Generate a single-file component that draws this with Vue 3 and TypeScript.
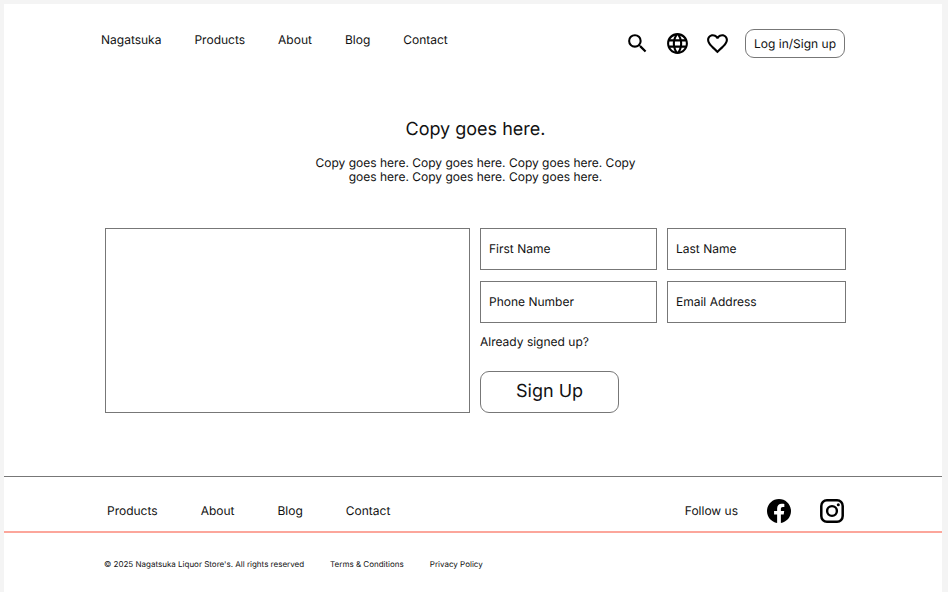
<script setup lang="ts">
interface LinkItem {
  label: string
  href: string
}

interface Field {
  id: string
  label: string
  type: string
}

const mainLinks: LinkItem[] = [
  { label: 'Nagatsuka', href: '#home' },
  { label: 'Products', href: '#products' },
  { label: 'About', href: '#about' },
  { label: 'Blog', href: '#blog' },
  { label: 'Contact', href: '#contact' },
]

const footerLinks: LinkItem[] = mainLinks.slice(1)

const legalLinks: LinkItem[] = [
  { label: 'Terms & Conditions', href: '#terms' },
  { label: 'Privacy Policy', href: '#privacy' },
]

const fields: Field[] = [
  { id: 'first-name', label: 'First Name', type: 'text' },
  { id: 'last-name', label: 'Last Name', type: 'text' },
  { id: 'phone', label: 'Phone Number', type: 'tel' },
  { id: 'email', label: 'Email Address', type: 'email' },
]
</script>

<template>
  <div class="page">
    <header class="header">
      <nav class="main-nav" aria-label="Main">
        <a v-for="link in mainLinks" :key="link.label" :href="link.href">{{ link.label }}</a>
      </nav>
      <div class="tools">
        <button class="icon-button" type="button" aria-label="Search">
          <svg viewBox="0 0 24 24"><path d="M15.5 14h-.79l-.28-.27A6.471 6.471 0 0 0 16 9.5 6.5 6.5 0 1 0 9.5 16c1.61 0 3.09-.59 4.23-1.57l.27.28v.79l5 4.99L20.49 19l-4.99-5zm-6 0C7.01 14 5 11.99 5 9.5S7.01 5 9.5 5 14 7.01 14 9.5 11.99 14 9.5 14z" /></svg>
        </button>
        <button class="icon-button" type="button" aria-label="Language">
          <svg viewBox="0 0 24 24"><path d="M11.99 2C6.47 2 2 6.48 2 12s4.47 10 9.99 10C17.52 22 22 17.52 22 12S17.52 2 11.99 2zm6.93 6h-2.95a15.65 15.65 0 0 0-1.38-3.56A8.03 8.03 0 0 1 18.92 8zM12 4.04c.83 1.2 1.48 2.53 1.91 3.96h-3.82c.43-1.43 1.08-2.76 1.91-3.96zM4.26 14C4.1 13.36 4 12.69 4 12s.1-1.36.26-2h3.38c-.08.66-.14 1.32-.14 2s.06 1.34.14 2H4.26zm.82 2h2.95c.32 1.25.78 2.45 1.38 3.56A7.987 7.987 0 0 1 5.08 16zm2.95-8H5.08a7.987 7.987 0 0 1 4.33-3.56A15.65 15.65 0 0 0 8.03 8zM12 19.96c-.83-1.2-1.48-2.53-1.91-3.96h3.82c-.43 1.43-1.08 2.76-1.91 3.96zM14.34 14H9.66c-.09-.66-.16-1.32-.16-2s.07-1.35.16-2h4.68c.09.65.16 1.32.16 2s-.07 1.34-.16 2zm.25 5.56c.6-1.11 1.06-2.31 1.38-3.56h2.95a8.03 8.03 0 0 1-4.33 3.56zM16.36 14c.08-.66.14-1.32.14-2s-.06-1.34-.14-2h3.38c.16.64.26 1.31.26 2s-.1 1.36-.26 2h-3.38z" /></svg>
        </button>
        <button class="icon-button" type="button" aria-label="Favourites">
          <svg viewBox="0 0 24 24"><path d="M16.5 3c-1.74 0-3.41.81-4.5 2.09C10.91 3.81 9.24 3 7.5 3 4.42 3 2 5.42 2 8.5c0 3.78 3.4 6.86 8.55 11.54L12 21.35l1.45-1.32C18.6 15.36 22 12.28 22 8.5 22 5.42 19.58 3 16.5 3zm-4.4 15.55-.1.1-.1-.1C7.14 14.24 4 11.39 4 8.5 4 6.5 5.5 5 7.5 5c1.54 0 3.04.99 3.57 2.36h1.87C13.46 5.99 14.96 5 16.5 5c2 0 3.5 1.5 3.5 3.5 0 2.89-3.14 5.74-7.9 10.05z" /></svg>
        </button>
        <button class="login" type="button">Log in/Sign up</button>
      </div>
    </header>

    <main class="content">
      <section class="intro">
        <h1>Copy goes here.</h1>
        <p>Copy goes here. Copy goes here. Copy goes here. Copy goes here. Copy goes here. Copy goes here.</p>
      </section>

      <section class="signup">
        <div class="picture"></div>
        <form class="form" @submit.prevent>
          <div class="fields">
            <div v-for="field in fields" :key="field.id" class="field">
              <label class="field-label" :for="field.id">{{ field.label }}</label>
              <input :id="field.id" :type="field.type" placeholder=" " />
            </div>
          </div>
          <a class="already" href="#login">Already signed up?</a>
          <button class="submit" type="submit">Sign Up</button>
        </form>
      </section>
    </main>

    <footer class="footer">
      <div class="footer-main">
        <nav class="footer-nav" aria-label="Footer">
          <a v-for="link in footerLinks" :key="link.label" :href="link.href">{{ link.label }}</a>
        </nav>
        <div class="social">
          <span>Follow us</span>
          <a href="#facebook" aria-label="Facebook">
            <svg viewBox="0 0 24 24"><path d="M24 12.07C24 5.41 18.63 0 12 0S0 5.41 0 12.07c0 6.03 4.39 11.02 10.13 11.93v-8.44H7.08v-3.49h3.05V9.41c0-3.02 1.79-4.69 4.53-4.69 1.31 0 2.68.24 2.68.24v2.97h-1.51c-1.49 0-1.95.93-1.95 1.89v2.25h3.32l-.53 3.49h-2.79V24C19.61 23.09 24 18.1 24 12.07z" /></svg>
          </a>
          <a href="#instagram" aria-label="Instagram">
            <svg viewBox="0 0 24 24">
              <rect x="1.3" y="1.3" width="21.4" height="21.4" rx="5.6" fill="none" stroke="currentColor" stroke-width="2.5" />
              <circle cx="12" cy="12" r="4.9" fill="none" stroke="currentColor" stroke-width="2.4" />
              <circle cx="18.3" cy="5.7" r="1.5" />
            </svg>
          </a>
        </div>
      </div>
      <div class="legal">
        <span>© 2025 Nagatsuka Liquor Store's. All rights reserved</span>
        <a v-for="link in legalLinks" :key="link.label" :href="link.href">{{ link.label }}</a>
      </div>
    </footer>
  </div>
</template>

<style>
body {
  background: #f4f4f4;
}
</style>

<style scoped>
.page {
  box-sizing: border-box;
  min-height: calc(100vh - 4px);
  margin: 4px 6px 0 4px;
  background: #fff;
  color: #111;
  font-family: Inter, "Liberation Sans", sans-serif;
  font-size: 12px;
  line-height: 14px;
  text-rendering: geometricPrecision;
}

a {
  color: inherit;
  text-decoration: none;
}

button {
  padding: 0;
  border: 0;
  background: none;
  color: inherit;
  font: inherit;
  text-rendering: inherit;
  cursor: pointer;
}

svg {
  display: block;
  width: 100%;
  height: 100%;
  color: #000;
  fill: currentColor;
}

.header {
  display: flex;
  justify-content: space-between;
  align-items: flex-start;
  padding: 25px 97px 0;
}

.main-nav {
  display: flex;
  gap: 33px;
  line-height: 22px;
}

.tools {
  display: flex;
  align-items: center;
  gap: 15px;
}

.icon-button {
  width: 25px;
  height: 25px;
}

.login {
  padding: 6px 8px;
  border: 1px solid #777;
  border-radius: 9px;
  line-height: 15px;
}

.content {
  padding: 61px 96px 0 101px;
}

.intro {
  display: flex;
  flex-direction: column;
  align-items: center;
  gap: 15px;
  text-align: center;
}

h1 {
  margin: 0;
  font-size: 18px;
  font-weight: 400;
  line-height: 22px;
}

.intro p {
  max-width: 320px;
  margin: 0;
}

.signup {
  display: grid;
  grid-template-columns: 365fr 366fr;
  gap: 10px;
  margin-top: 44px;
}

.picture {
  border: 1px solid #777;
}

.form {
  display: flex;
  flex-direction: column;
  align-items: flex-start;
}

.fields {
  display: grid;
  grid-template-columns: 177fr 179fr;
  gap: 11px 10px;
  width: 100%;
}

.field {
  display: grid;
  align-items: center;
}

.field-label,
.field input {
  grid-area: 1 / 1;
}

.field-label {
  z-index: 1;
  padding: 0 9px;
  pointer-events: none;
}

.field input {
  box-sizing: border-box;
  width: 100%;
  min-width: 0;
  height: 42px;
  margin: 0;
  padding: 0 9px;
  border: 1px solid #777;
  border-radius: 0;
  background: #fff;
  color: inherit;
  font: inherit;
}

.field:has(input:not(:placeholder-shown)) .field-label {
  visibility: hidden;
}

.already {
  margin-top: 12px;
}

.submit {
  margin-top: 22px;
  padding: 9px 35px;
  border: 1px solid #777;
  border-radius: 9px;
  font-size: 18px;
  line-height: 22px;
}

.footer {
  margin-top: 63px;
}

.footer-main {
  display: flex;
  justify-content: space-between;
  align-items: center;
  padding: 22px 98px 8px 103px;
  border-top: 1px solid #777;
  border-bottom: 2px solid #fca69b;
}

.footer-nav {
  display: flex;
  gap: 43px;
}

.social {
  display: flex;
  align-items: center;
  gap: 29px;
}

.social a {
  width: 24px;
  height: 24px;
}

.legal {
  display: flex;
  gap: 26px;
  padding: 24px 100px;
  font-size: 8px;
}
</style>
